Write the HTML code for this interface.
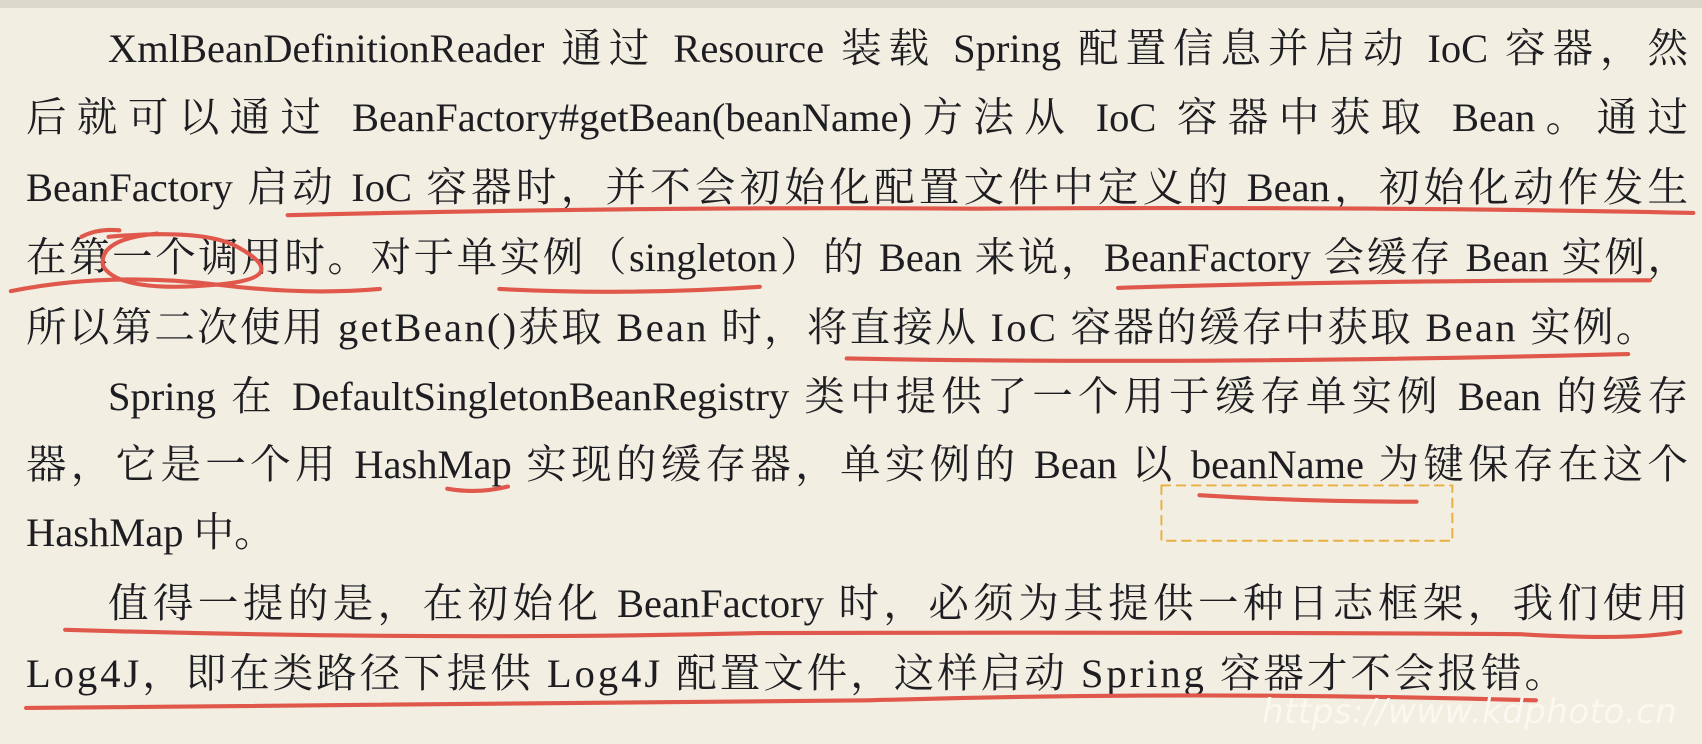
<!DOCTYPE html>
<html><head><meta charset="utf-8"><style>
html,body{margin:0;padding:0}
body{width:1702px;height:744px;overflow:hidden;background:#f2eee2;position:relative;font-family:"Liberation Serif","Noto Serif CJK SC",serif;color:#1e1e22}
.l{position:absolute;height:70px;line-height:70px;font-size:40.5px;white-space:nowrap;text-align:justify;text-align-last:justify}
.n{text-align-last:left}
svg{position:absolute;left:0;top:0}
.wm{position:absolute;left:1262px;top:692px;font-family:"DejaVu Sans",sans-serif;font-style:italic;font-size:34px;color:#fbf8f0;letter-spacing:0.5px}
</style></head><body>
<div style="position:absolute;left:0;top:0;width:1702px;height:8px;background:#ddd8cc"></div>
<div class="l" style="left:108px;top:14px;width:1580px">XmlBeanDefinitionReader 通过 Resource 装载 Spring 配置信息并启动 IoC 容器，然</div>
<div class="l" style="left:26px;top:83px;width:1662px">后就可以通过 BeanFactory#getBean(beanName)方法从 IoC 容器中获取 Bean。通过</div>
<div class="l" style="left:26px;top:153px;width:1662px">BeanFactory 启动 IoC 容器时，并不会初始化配置文件中定义的 Bean，初始化动作发生</div>
<div class="l" style="left:26px;top:223px;width:1662px">在第一个调用时。对于单实例（singleton）的 Bean 来说，BeanFactory 会缓存 Bean 实例，</div>
<div class="l n" style="left:26px;top:293px;width:1662px;letter-spacing:2.3px">所以第二次使用 getBean()获取 Bean 时，将直接从 IoC 容器的缓存中获取 Bean 实例。</div>
<div class="l" style="left:108px;top:362px;width:1580px">Spring 在 DefaultSingletonBeanRegistry 类中提供了一个用于缓存单实例 Bean 的缓存</div>
<div class="l" style="left:26px;top:430px;width:1662px">器，它是一个用 HashMap 实现的缓存器，单实例的 Bean 以 beanName 为键保存在这个</div>
<div class="l n" style="left:26px;top:498px;width:1662px">HashMap 中。</div>
<div class="l" style="left:108px;top:569px;width:1580px">值得一提的是，在初始化 BeanFactory 时，必须为其提供一种日志框架，我们使用</div>
<div class="l n" style="left:26px;top:639px;width:1662px;letter-spacing:3px">Log4J，即在类路径下提供 Log4J 配置文件，这样启动 Spring 容器才不会报错。</div>
<svg width="1702" height="744" viewBox="0 0 1568 685" fill="none" stroke="#e0574b" stroke-width="3.8" stroke-linecap="round">
<path d="M265 198 Q600 190 900 192 Q1300 190 1560 196"/>
<path d="M10 268 Q100 250 200 262 Q280 272 350 266"/>
<path d="M145 215 Q90 220 95 245 Q110 270 200 262 Q270 256 220 228 Q190 210 100 218"/>
<path d="M75 218 Q90 210 110 212"/>
<path d="M460 266 Q580 272 700 264"/>
<path d="M1030 265 Q1250 258 1520 258"/>
<path d="M780 330 Q1100 336 1500 326"/>
<path d="M412 450 Q440 455 468 448"/>
<path d="M1105 456 Q1200 462 1305 462"/>
<path d="M60 580 Q400 590 700 583 Q1100 582 1400 584 Q1500 590 1548 582"/>
<path d="M24 652 Q400 650 800 645 Q1100 636 1415 645"/>
<path d="M1070 447 L1338 447 L1338 498 L1070 498 Z" stroke="#e8b040" stroke-width="1.8" stroke-dasharray="8 6"/>
</svg>
<div class="wm">https://www.kdphoto.cn</div>
</body></html>
